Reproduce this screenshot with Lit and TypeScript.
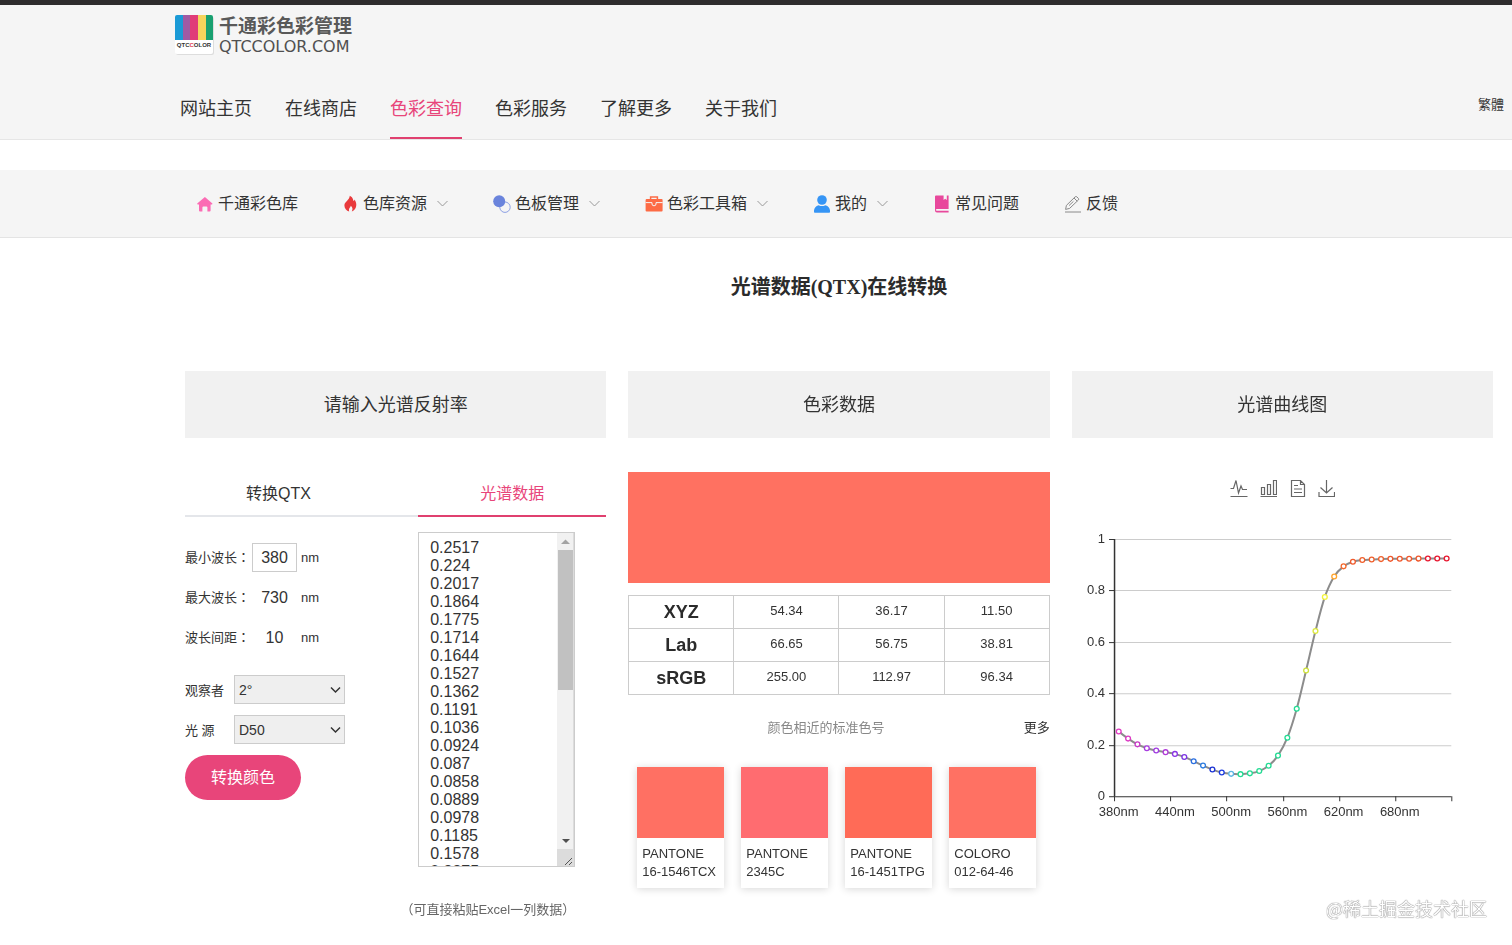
import { LitElement, html, svg, css } from "lit";
import { customElement, property, state } from "lit/decorators.js";
import { classMap } from "lit/directives/class-map.js";
import { styleMap } from "lit/directives/style-map.js";

const REFLECTANCE = [
  0.2517, 0.224, 0.2017, 0.1864, 0.1775, 0.1714, 0.1644, 0.1527, 0.1362,
  0.1191, 0.1036, 0.0924, 0.087, 0.0858, 0.0889, 0.0978, 0.1185, 0.1578,
  0.2275, 0.3402, 0.4889, 0.6422, 0.7748, 0.8545, 0.8937, 0.9115, 0.9185,
  0.9202, 0.9218, 0.9228, 0.9232, 0.9235, 0.9238, 0.924, 0.924, 0.924,
];

const POINT_COLORS = [
  "#e23cc4", "#dc3cc4", "#c83cc8", "#a83ce0", "#a03ce0", "#b03cd8",
  "#8a34e4", "#7c34e4", "#2c70e0", "#2c7ce0", "#1c34d4", "#1c3ce0",
  "#5cb4e4", "#24dc94", "#24dc94", "#24dc94", "#24dc94", "#24dc94",
  "#24dc94", "#24dc94", "#cfe23c", "#dce83c", "#f4f43c", "#ffa42c",
  "#f4682c", "#f05a2c", "#f0602c", "#f0602c", "#f0602c", "#f0582c",
  "#f0582c", "#f0582c", "#f0582c", "#e81830", "#e81830", "#e81830",
];

const ICONS: Record<string, unknown> = {
  home: svg`<svg width="18" height="18" viewBox="0 0 18 18"><path fill="#fb6cb4" d="M8.9 2 L16.4 8.4 Q16.6 9.4 15.7 9.4 H14.6 V15.4 Q14.6 16.4 13.6 16.4 H11.4 V12.6 Q11.4 11.6 10.4 11.6 H7.4 Q6.4 11.6 6.4 12.6 V16.4 H4 Q3 16.4 3 15.4 V9.4 H2 Q1 9.4 1.2 8.4 Z"/></svg>`,
  flame: svg`<svg width="16" height="18" viewBox="0 0 16 18"><path fill="#e93a3c" d="M6.8 .8 C10.2 2.4 9.8 4.6 10.6 6 C11.2 5.6 11.4 5 11.4 4.4 C13 6.4 13.6 8.6 13.2 11 C12.8 14 10.8 15.8 8.8 16.4 C10 14.4 9.6 12.2 7.8 10.8 C7.6 12.4 5.2 13.4 6.2 16.4 C3.4 15.6 1.4 13.4 1.4 10.4 C1.4 6.8 6.4 5.4 6.8 .8 Z"/></svg>`,
  circles: svg`<svg width="18" height="18" viewBox="0 0 18 18"><circle cx="12" cy="12.2" r="5.2" fill="#f5f5f5" stroke="#8da0e4" stroke-width="1"/><circle cx="6.2" cy="6.2" r="6" fill="#6a84dc"/></svg>`,
  toolbox: svg`<svg width="18" height="18" viewBox="0 0 18 18"><path fill="none" stroke="#fd6b45" stroke-width="1.5" d="M5.6 4.6 V2 H12.4 V4.6"/><rect x=".6" y="4" width="17" height="12.4" rx="1" fill="#fd6b45"/><path fill="none" stroke="#f5f5f5" d="M.6 7.6 H7 V9 Q7 10.8 9 10.8 Q11 10.8 11 9 V7.6 H17.6"/></svg>`,
  user: svg`<svg width="18" height="18" viewBox="0 0 18 18"><g fill="#3695f5"><circle cx="9" cy="5" r="4.8"/><path d="M1 17 V15.4 Q1.4 11.6 5.6 10.2 Q9 12 12.4 10.2 Q16.6 11.6 17 15.4 V17 Q17 17.8 16.2 17.8 H1.8 Q1 17.8 1 17 Z"/></g></svg>`,
  book: svg`<svg width="18" height="18" viewBox="0 0 18 18"><path fill="#e8489c" d="M3 .6 H10.6 V5 L12.2 3.8 L13.8 5 V.6 H15.6 V14 H4 Q2.8 14 2.8 15 Q2.8 15.8 4 15.8 H15.6 V17.4 H4 Q2 17.4 2 15.4 V1.6 Q2 .6 3 .6 Z"/></svg>`,
  pen: svg`<svg width="18" height="18" viewBox="0 0 18 18"><g fill="none" stroke="#8a8a8a"><path d="M1.6 14.4 L2.4 10.4 L11.2 1.8 Q12 1.2 12.8 1.8 L14.4 3.4 Q15 4.2 14.4 5 L5.6 13.4 Z M10 3 L13.2 6.2 M5 10.6 L9.4 6.4"/><path d="M1 17 H17"/></g></svg>`,
};

const MENU = [
  { icon: "home", label: "千通彩色库", more: false },
  { icon: "flame", label: "色库资源", more: true },
  { icon: "circles", label: "色板管理", more: true },
  { icon: "toolbox", label: "色彩工具箱", more: true },
  { icon: "user", label: "我的", more: true },
  { icon: "book", label: "常见问题", more: false },
  { icon: "pen", label: "反馈", more: false },
];

@customElement("site-header")
class SiteHeader extends LitElement {
  static styles = css`
    :host {
      display: block;
      border-top: 5px solid #2e2c2d;
      border-bottom: 1px solid #e6e6e6;
      background: #f5f5f5;
    }
    .brand {
      display: flex;
      align-items: flex-start;
      gap: 4px;
      padding: 8px 0 0 174px;
    }
    .name {
      display: block;
      color: #595959;
      font: bold 19px/22px "Noto Sans CJK SC", sans-serif;
      margin-top: 1px;
    }
    .domain {
      display: block;
      color: #505050;
      font: 16px/21px "DejaVu Sans", sans-serif;
    }
    .row {
      display: flex;
      align-items: flex-end;
      justify-content: space-between;
      padding: 38px 8px 0 180px;
    }
    nav {
      display: flex;
      gap: 33px;
    }
    a {
      color: #333;
      text-decoration: none;
    }
    nav a {
      font-size: 18px;
      line-height: 26px;
      padding-bottom: 15px;
      border-bottom: 2px solid transparent;
    }
    nav .active {
      color: #e8457a;
      border-color: #e0406f;
    }
    .lang {
      font-size: 13px;
      line-height: 18px;
      padding-bottom: 26px;
      font-family: "Noto Sans CJK TC", sans-serif;
    }
  `;
  render() {
    const items = ["网站主页", "在线商店", "色彩查询", "色彩服务", "了解更多", "关于我们"];
    return html`
      <div class="brand">
        <svg width="41" height="44" viewBox="0 0 41 44">
          <rect x="2" y="4" width="38" height="38" rx="2" fill="#ddd" />
          <rect x="1" y="2" width="38" height="39" rx="2" fill="#fff" />
          <path fill="#1a9ad6" d="M3 2 H9 V27 H1 V4 Q1 2 3 2 Z" />
          <rect x="9" y="2" width="7" height="25" fill="#a05aa4" />
          <rect x="16" y="2" width="8" height="25" fill="#e03c78" />
          <rect x="24" y="2" width="8" height="25" fill="#f4d45c" />
          <path fill="#18a070" d="M32 2 H37 Q39 2 39 4 V27 H32 Z" />
          <text x="20" y="34" text-anchor="middle" font-family="Liberation Sans, sans-serif" font-weight="bold" font-size="6" fill="#333">QTC<tspan fill="#e03c50">C</tspan>OLOR</text>
        </svg>
        <div>
          <span class="name">千通彩色彩管理</span>
          <span class="domain">QTCCOLOR.COM</span>
        </div>
      </div>
      <div class="row">
        <nav>
          ${items.map((t, i) => html`<a href="#" class=${classMap({ active: i === 2 })}>${t}</a>`)}
        </nav>
        <a class="lang" href="#">繁體</a>
      </div>
    `;
  }
}

@customElement("tool-menu")
class ToolMenu extends LitElement {
  static styles = css`
    :host {
      display: block;
      margin-top: 30px;
      background: #f5f5f5;
      border-bottom: 1px solid #e4e4e4;
    }
    nav {
      display: flex;
      gap: 45px;
      padding: 22px 0 21px 196px;
    }
    a {
      display: flex;
      align-items: center;
      gap: 4px;
      color: #333;
      font-size: 16px;
      line-height: 24px;
      text-decoration: none;
      white-space: nowrap;
    }
    .chevron {
      margin-left: 6px;
    }
  `;
  render() {
    return html`<nav>
      ${MENU.map(
        (m) => html`<a href="#"
          >${ICONS[m.icon]}<span>${m.label}</span>${m.more
            ? html`<svg class="chevron" width="11" height="8" viewBox="0 0 11 8"><path d="M.5 1 L5.5 6 L10.5 1" fill="none" stroke="#999" /></svg>`
            : ""}</a
        >`
      )}
    </nav>`;
  }
}

@customElement("spectral-form")
class SpectralForm extends LitElement {
  @state() tab = 1;
  static styles = css`
    :host {
      display: block;
      color: #333;
      font-size: 13px;
    }
    .tabs,
    .body {
      display: grid;
      grid-template-columns: 187fr 46fr 188fr;
    }
    .tabs {
      background: linear-gradient(#e4e6ea, #e4e6ea) bottom / 100% 2px no-repeat;
    }
    button {
      border: 0;
      font: inherit;
      font-size: 16px;
    }
    .tabs button {
      background: none;
      color: #333;
      line-height: 24px;
      padding: 10px 0 9px;
      border-bottom: 2px solid transparent;
    }
    .tabs .second {
      grid-column: 3;
    }
    .tabs .active {
      color: #e8457a;
      border-color: #e0406f;
    }
    .body {
      padding-top: 15px;
    }
    .fields {
      display: flex;
      flex-direction: column;
      gap: 11px;
      padding: 11px 0 0;
    }
    .field {
      display: flex;
      align-items: center;
      line-height: 26px;
      white-space: nowrap;
    }
    .field label {
      width: 67px;
      flex: none;
    }
    .colon {
      font-family: "Noto Sans CJK TC", sans-serif;
      line-height: 1;
    }
    input {
      box-sizing: border-box;
      width: 45px;
      height: 29px;
      margin: 0 4px 0 0;
      padding: 0;
      border: 1px solid transparent;
      background: none;
      color: #333;
      font: 16px "Liberation Sans", sans-serif;
      text-align: center;
    }
    input.editable {
      border-color: #ccc;
    }
    .choice {
      display: flex;
      align-items: center;
    }
    .choice label {
      width: 49px;
      flex: none;
    }
    .choice.gap {
      margin-top: 12px;
    }
    .select {
      display: grid;
      align-items: center;
      width: 111px;
    }
    .select > * {
      grid-area: 1 / 1;
    }
    .select svg {
      justify-self: end;
      margin-right: 4px;
      pointer-events: none;
    }
    select {
      appearance: none;
      width: 100%;
      height: 29px;
      padding: 0 4px;
      border: 1px solid #ccc;
      border-radius: 0;
      background: #efefef;
      color: #333;
      font: 14px "Liberation Sans", sans-serif;
    }
    .submit {
      align-self: flex-start;
      padding: 10px 26px;
      border-radius: 23px;
      background: #e8457a;
      color: #fff;
      line-height: 25px;
    }
    .paste {
      grid-column: 3;
      display: flex;
      flex-direction: column;
      align-items: flex-end;
      width: 157px;
    }
    .box {
      display: grid;
      grid-template-columns: 1fr 17px;
      align-self: stretch;
      border: 1px solid #ccc;
    }
    textarea {
      box-sizing: border-box;
      height: 333px;
      padding: 6px 0 0 11px;
      border: 0;
      resize: none;
      scrollbar-width: none;
      color: #333;
      font: 16px/18px "Liberation Sans", sans-serif;
      width: 100%;
      outline: 0;
    }
    .bar {
      display: grid;
      grid-template-rows: 17px 140px 1fr 17px 17px;
      justify-items: center;
      align-items: center;
      background: #f1f1f1;
      border-right: 1px solid #dcdcdc;
    }
    .thumb {
      width: 15px;
      height: 100%;
      background: #c1c1c1;
    }
    .grip {
      grid-row: 5;
      background: #dcdcdc;
    }
    .down {
      grid-row: 4;
    }
    .note {
      margin: 34px 0 0;
      color: #666;
      line-height: 18px;
      white-space: nowrap;
    }
  `;
  render() {
    const arrow = html`<svg width="11" height="8" viewBox="0 0 11 8"><path d="M1 1.5 L5.5 6 L10 1.5" fill="none" stroke="#333" stroke-width="1.5" /></svg>`;
    const field = (id: string, label: string, value: string, editable: boolean) => html`<div class="field">
      <label for=${id}>${label}<span class="colon">：</span></label>
      <input id=${id} class=${classMap({ editable })} .value=${value} ?readonly=${!editable} />nm
    </div>`;
    return html`
      <div class="tabs">
        <button class=${classMap({ active: this.tab === 0 })} @click=${() => (this.tab = 0)}>转换QTX</button>
        <button class=${classMap({ second: true, active: this.tab === 1 })} @click=${() => (this.tab = 1)}>光谱数据</button>
      </div>
      <div class="body">
        <div class="fields">
          ${field("min", "最小波长", "380", true)} ${field("max", "最大波长", "730", false)}
          ${field("step", "波长间距", "10", false)}
          <div class="choice gap">
            <label for="observer">观察者</label>
            <div class="select"><select id="observer"><option>2°</option><option>10°</option></select>${arrow}</div>
          </div>
          <div class="choice">
            <label for="source">光 源</label>
            <div class="select"><select id="source"><option>D50</option><option>D65</option></select>${arrow}</div>
          </div>
          <button class="submit">转换颜色</button>
        </div>
        <div class="paste">
          <div class="box">
            <textarea aria-label="光谱数据" .value=${REFLECTANCE.join("\n")}></textarea>
            <div class="bar">
              <svg width="9" height="5" viewBox="0 0 9 5"><path d="M0 5 L4.5 .5 L9 5 Z" fill="#a3a3a3" /></svg>
              <div class="thumb"></div>
              <svg class="down" width="8" height="4" viewBox="0 0 8 4"><path d="M0 0 H8 L4 4 Z" fill="#505050" /></svg>
              <svg class="grip" width="17" height="17" viewBox="0 0 17 17"><path d="M8 16 L15 9 M12 16 L15 13" stroke="#555" fill="none" /></svg>
            </div>
          </div>
          <p class="note">（可直接粘贴Excel一列数据）</p>
        </div>
      </div>
    `;
  }
}

@customElement("color-result")
class ColorResult extends LitElement {
  static styles = css`
    :host {
      display: block;
      color: #333;
      font-size: 13px;
    }
    .swatch {
      height: 111px;
      background: #ff7161;
    }
    table {
      width: 100%;
      margin-top: 12px;
      border-collapse: collapse;
      table-layout: fixed;
    }
    th,
    td {
      border: 1px solid #ccc;
      padding: 0 0 3px;
      height: 29px;
      text-align: center;
      line-height: 22px;
    }
    th {
      padding: 0 0 1px;
      height: 31px;
      font-size: 18px;
      color: #2b2b2b;
    }
    .near {
      display: flex;
      margin-top: 23px;
      line-height: 20px;
    }
    .near span {
      flex: 1;
      text-align: center;
      color: #888;
    }
    a {
      color: #333;
      text-decoration: none;
    }
    .cards {
      display: flex;
      gap: 17px;
      margin: 29px 0 0 9px;
      padding: 0;
      list-style: none;
    }
    .cards li {
      width: 87px;
      box-shadow: 0 1px 8px rgba(0, 0, 0, 0.16);
      line-height: 18px;
      white-space: nowrap;
    }
    .chip {
      height: 71px;
    }
    .code {
      padding: 7px 0 7px 5px;
    }
  `;
  render() {
    const rows = [
      ["XYZ", "54.34", "36.17", "11.50"],
      ["Lab", "66.65", "56.75", "38.81"],
      ["sRGB", "255.00", "112.97", "96.34"],
    ];
    const cards = [
      ["#ff7063", "PANTONE", "16-1546TCX"],
      ["#ff6c70", "PANTONE", "2345C"],
      ["#ff6b57", "PANTONE", "16-1451TPG"],
      ["#ff7163", "COLORO", "012-64-46"],
    ];
    return html`
      <div class="swatch"></div>
      <table>
        <tbody>
          ${rows.map(([h, ...v]) => html`<tr><th scope="row">${h}</th>${v.map((x) => html`<td>${x}</td>`)}</tr>`)}
        </tbody>
      </table>
      <div class="near"><span>颜色相近的标准色号</span><a href="#">更多</a></div>
      <ul class="cards">
        ${cards.map(
          ([c, brand, code]) => html`<li>
            <div class="chip" style=${styleMap({ background: c })}></div>
            <div class="code">${brand}<br />${code}</div>
          </li>`
        )}
      </ul>
    `;
  }
}

@customElement("spectral-chart")
class SpectralChart extends LitElement {
  @property({ attribute: false }) values: number[] = REFLECTANCE;
  static styles = css`
    :host {
      display: block;
      padding-top: 7px;
    }
    .tools {
      display: flex;
      justify-content: center;
      gap: 11px;
    }
    .tools button {
      display: flex;
      padding: 0;
      border: 0;
      background: none;
    }
    .plot {
      display: block;
      width: 100%;
      margin-top: 28px;
    }
    .plot text {
      font: 13px "Liberation Sans", sans-serif;
      fill: #333;
    }
  `;
  render() {
    const left = 42;
    const right = 379;
    const top = 13;
    const bottom = 270;
    const step = (right - left) / this.values.length;
    const pts = this.values.map((v, i) => [left + step * (i + 0.5), bottom - v * (bottom - top)]);
    let d = `M${pts[0][0]} ${pts[0][1]}`;
    for (let i = 0; i < pts.length - 1; i++) {
      const a = pts[Math.max(i - 1, 0)];
      const b = pts[i];
      const c = pts[i + 1];
      const e = pts[Math.min(i + 2, pts.length - 1)];
      d += ` C${b[0] + (c[0] - a[0]) / 6} ${b[1] + (c[1] - a[1]) / 6} ${c[0] - (e[0] - b[0]) / 6} ${c[1] - (e[1] - b[1]) / 6} ${c[0]} ${c[1]}`;
    }
    const tools: [string, string][] = [
      ["折线图", "M.5 9.5 H3.5 L6 1.5 L8.5 14 L11 7 L12.5 10.5 H17 M.5 17.5 H17.5"],
      ["柱状图", "M2.5 8.5 H5.5 V15.5 H2.5 Z M8.5 5.5 H11.5 V15.5 H8.5 Z M14.5 1.5 H17.5 V15.5 H14.5 Z M1.5 17.5 H18"],
      ["数据视图", "M3.5 1.5 H12.5 L16.5 5.5 V17.5 H3.5 Z M12.5 1.5 V5.5 H16.5 M6 6.5 H10 M6 10 H14 M6 13.5 H14"],
      ["保存", "M9.5 1 V14 M3.5 8.5 L9.5 14 L15.5 8.5 M2 13 V17.5 H17.5 V13"],
    ];
    return html`
      <div class="tools">
        ${tools.map(
          ([name, path]) => html`<button aria-label=${name}>
            <svg width="18" height="19" viewBox="0 0 18 19"><path d=${path} fill="none" stroke="#666" stroke-width="1.2" /></svg>
          </button>`
        )}
      </div>
      <svg class="plot" viewBox="0 0 421 300" role="img" aria-label="光谱曲线图">
        ${[0, 1, 2, 3, 4, 5].map((i) => {
          const y = Math.round(bottom - ((bottom - top) * i) / 5) + 0.5;
          return svg`<path d="M${left} ${y} H${right}" stroke=${i ? "#ccc" : "#333"} /><path d="M${left - 5} ${y} H${left}" stroke="#333" /><text x="33" y=${y + 3} text-anchor="end">${i === 5 ? "1" : i ? `0.${i * 2}` : "0"}</text>`;
        })}
        <path d="M${left + 0.5} ${top} V${bottom}" stroke="#333" stroke-width="1.5" />
        ${[0, 6, 12, 18, 24, 30, 36].map((i) => {
          const x = Math.round(left + step * i) + 0.5;
          return svg`<path d="M${x} ${bottom} V${bottom + 5}" stroke="#333" />${
            i < 36 ? svg`<text x=${left + step * (i + 0.5)} y="290" text-anchor="middle">${380 + i * 10}nm</text>` : ""
          }`;
        })}
        <path d=${d} fill="none" stroke="#8c8c8c" stroke-width="2" />
        ${pts.map((p, i) => svg`<circle cx=${p[0]} cy=${p[1]} r="2.4" fill="#fff" stroke=${POINT_COLORS[i]} stroke-width="1.3" />`)}
      </svg>
    `;
  }
}

@customElement("app-root")
class AppRoot extends LitElement {
  static styles = css`
    :host {
      display: block;
      position: relative;
      min-height: 100vh;
      background: #fff;
      color: #333;
      font-family: "Liberation Sans", "Noto Sans CJK SC", sans-serif;
    }
    main {
      padding: 35px 19px 0 185px;
    }
    h1 {
      margin: 0 0 69px;
      color: #2b2b2b;
      text-align: center;
      font: bold 20px/29px "Liberation Serif", "Noto Sans CJK SC", serif;
    }
    .columns {
      display: grid;
      grid-template-columns: repeat(3, minmax(0, 1fr));
      gap: 22px;
    }
    h2 {
      margin: 0 0 34px;
      padding: 21px 0 19px;
      background: #f1f1f1;
      text-align: center;
      font-weight: 400;
      font-size: 18px;
      line-height: 27px;
    }
    .mark {
      position: absolute;
      right: 25px;
      bottom: 24px;
      color: #fff;
      font: 18px/26px "Noto Sans CJK SC", sans-serif;
      text-shadow: 0 0 1px #666, 0 0 1px #888;
    }
  `;
  render() {
    return html`
      <site-header></site-header>
      <tool-menu></tool-menu>
      <main>
        <h1>光谱数据(QTX)在线转换</h1>
        <div class="columns">
          <section><h2>请输入光谱反射率</h2><spectral-form></spectral-form></section>
          <section><h2>色彩数据</h2><color-result></color-result></section>
          <section><h2>光谱曲线图</h2><spectral-chart></spectral-chart></section>
        </div>
      </main>
      <div class="mark">@稀土掘金技术社区</div>
    `;
  }
}
